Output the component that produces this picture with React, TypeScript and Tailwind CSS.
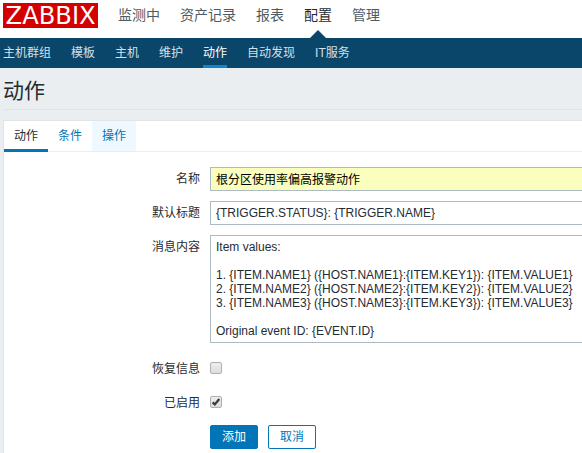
import React from "react";

const mainMenu = ["监测中", "资产记录", "报表", "配置", "管理"];
const subMenu = ["主机群组", "模板", "主机", "维护", "动作", "自动发现", "IT服务"];

const message = `Item values:

1. {ITEM.NAME1} ({HOST.NAME1}:{ITEM.KEY1}): {ITEM.VALUE1}
2. {ITEM.NAME2} ({HOST.NAME2}:{ITEM.KEY2}): {ITEM.VALUE2}
3. {ITEM.NAME3} ({HOST.NAME3}:{ITEM.KEY3}): {ITEM.VALUE3}

Original event ID: {EVENT.ID}`;

function Row({ label, top, children }: { label: string; top?: boolean; children: React.ReactNode }) {
  return (
    <div className={`flex gap-[10px] ${top ? "items-start" : "items-center"}`}>
      <div className="h-6 w-[196px] shrink-0 text-right leading-[25px]">{label}</div>
      {children}
    </div>
  );
}

function Checkbox({ checked }: { checked?: boolean }) {
  return (
    <span
      role="checkbox"
      aria-checked={!!checked}
      className="mb-[2px] flex h-3 w-3 items-center justify-center rounded-[2px] border border-[#b0b0b0] bg-gradient-to-b from-[#eeeeee] to-[#dddddd]"
    >
      {checked && (
        <svg width="10" height="10" viewBox="0 0 10 10" className="shrink-0">
          <path d="M1.6 5.4 L3.8 7.4 L8.3 2" fill="none" stroke="#3c3c3c" strokeWidth="2.3" />
        </svg>
      )}
    </span>
  );
}

export default function App() {
  return (
    <div className="h-[453px] w-[582px] overflow-hidden bg-[#ebeef0] font-['Liberation_Sans','Noto_Sans_CJK_SC',sans-serif] text-xs text-[#1f2c33]">
      <header className="flex h-[38px] bg-white pl-[3px]">
        <div className="mt-[3px] flex h-[25px] w-[95px] shrink-0 items-center justify-center bg-[#d40000]">
          <svg width="95" height="25" viewBox="0 0 95 25" className="overflow-visible">
            <text x="2.6" y="21.4" textLength="90" lengthAdjust="spacingAndGlyphs" fontFamily="DejaVu Sans" fontSize="24.5" fill="#fff">
              ZABBIX
            </text>
          </svg>
        </div>
        <nav className="ml-5 flex gap-5 text-sm leading-[30px] text-[#4f5b63]">
          {mainMenu.map((item) => (
            <div key={item} className={item === "配置" ? "flex flex-col items-center text-[#1f2c33]" : ""}>
              <div className="h-[30px]">{item}</div>
              {item === "配置" && (
                <svg width="16" height="8" viewBox="0 0 16 8">
                  <path d="M0 8 L8 0 L16 8 Z" fill="#0a466a" />
                </svg>
              )}
            </div>
          ))}
        </nav>
      </header>
      <nav className="flex h-[30px] gap-5 bg-[#0a466a] pl-[3px] leading-[31px] text-[#d3e0e8]">
        {subMenu.map((item) => (
          <div key={item} className={item === "动作" ? "h-[30px] border-b-[3px] border-[#0f85cc] text-white" : "h-[30px]"}>
            {item}
          </div>
        ))}
      </nav>
      <main className="pl-[3px]">
        <h1 className="h-[42px] border-b border-[#dfe4e7] text-[21px] leading-[46px]">动作</h1>
        <section className="mt-[10px] h-[340px] border-t border-l border-[#dfe4e7] bg-white">
          <div className="flex h-[31px] border-b border-[#ebeef0] leading-[31px] text-[#0275b8]">
            <div className="h-[31px] w-11 border-b-[3px] border-[#0275b8] text-center text-[#1f2c33]">动作</div>
            <div className="w-11 text-center">条件</div>
            <div className="w-11 bg-[#f0f8ff] text-center">操作</div>
          </div>
          <form className="flex flex-col gap-[10px] pt-[15px]">
            <Row label="名称">
              <div className="h-6 flex-1 border-y border-l border-[#acbbc2] bg-[#faffbd] px-[5px] leading-[25px] text-black">
                根分区使用率偏高报警动作
              </div>
            </Row>
            <Row label="默认标题">
              <div className="h-6 flex-1 border-y border-l border-[#acbbc2] px-[5px] leading-[22px]">
                {"{TRIGGER.STATUS}: {TRIGGER.NAME}"}
              </div>
            </Row>
            <Row label="消息内容" top>
              <div className="h-[108px] flex-1 border-y border-l border-[#acbbc2] px-[5px] pt-1 leading-[14px] whitespace-pre">
                {message}
              </div>
            </Row>
            <div className="mt-1">
              <Row label="恢复信息">
                <Checkbox />
              </Row>
            </div>
            <Row label="已启用">
              <Checkbox checked />
            </Row>
            <div className="ml-[206px] flex gap-[10px]">
              <button type="button" className="h-6 w-12 rounded-[2px] border border-[#0275b8] bg-[#0275b8] leading-[23px] text-white">
                添加
              </button>
              <button type="button" className="h-6 w-12 rounded-[2px] border border-[#0275b8] bg-white leading-[23px] text-[#0275b8]">
                取消
              </button>
            </div>
          </form>
        </section>
      </main>
    </div>
  );
}
